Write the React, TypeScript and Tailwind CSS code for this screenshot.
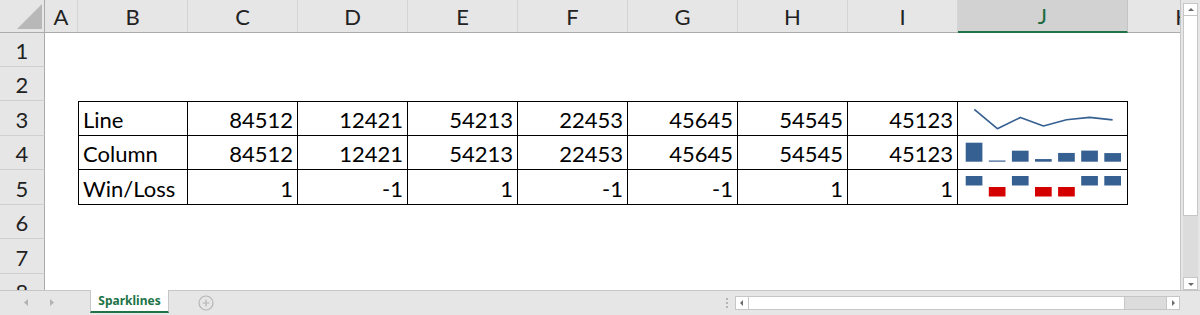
import React from "react";

const COLS = [
  { k: "A", w: 33 },
  { k: "B", w: 110 },
  { k: "C", w: 110 },
  { k: "D", w: 110 },
  { k: "E", w: 110 },
  { k: "F", w: 110 },
  { k: "G", w: 110 },
  { k: "H", w: 110 },
  { k: "I", w: 110 },
  { k: "J", w: 170 },
  { k: "K", w: 110 },
];

const ROW_H = [34, 34, 35, 34, 35, 34, 35, 34];

const VALUES = [84512, 12421, 54213, 22453, 45645, 54545, 45123];
const WINLOSS = [1, -1, 1, -1, -1, 1, 1];

const TABLE: Record<number, (string | number)[]> = {
  3: ["Line", ...VALUES],
  4: ["Column", ...VALUES],
  5: ["Win/Loss", ...WINLOSS],
};

const BLUE = "#376092";
const RED = "#d40000";
const max = Math.max(...VALUES);
const min = Math.min(...VALUES);

function LineSpark() {
  const pts = VALUES.map((v, i) => `${16.3 + i * 23.05},${7.3 + ((max - v) / (max - min)) * 19.4}`).join(" ");
  return (
    <svg width="169" height="34" className="block">
      <polyline points={pts} fill="none" stroke={BLUE} strokeWidth="1.7" strokeLinejoin="round" />
    </svg>
  );
}

function ColumnSpark() {
  return (
    <svg width="169" height="34" className="block">
      {VALUES.map((v, i) => {
        const h = Math.max(1.2, ((v - min) / (max - min)) * 19);
        return <rect key={i} x={7.7 + i * 23.1} y={25.7 - h} width="16.7" height={h} fill={BLUE} />;
      })}
    </svg>
  );
}

function WinLossSpark() {
  return (
    <svg width="169" height="34" className="block">
      {WINLOSS.map((v, i) => (
        <rect key={i} x={7.7 + i * 23.1} y={v > 0 ? 6 : 17} width="16.7" height="9.5" fill={v > 0 ? BLUE : RED} />
      ))}
    </svg>
  );
}

function HeaderRow() {
  return (
    <div className="flex h-[33px] shrink-0 bg-[#e6e6e6] border-b border-[#ababab]">
      <div className="w-[45px] shrink-0 border-r border-[#ababab] relative">
        <svg width="45" height="32" className="block">
          <polygon points="17,29 42,29 42,4" fill="#b8b8b8" />
        </svg>
      </div>
      {COLS.map((c) =>
        c.k === "J" ? (
          <div
            key={c.k}
            style={{ width: c.w }}
            className="shrink-0 flex items-center justify-center bg-[#d2d2d2] border-r border-[#c4c4c4] border-b-2 border-b-[#217346] -mb-px text-[#1e6b40]"
          >
            {c.k}
          </div>
        ) : (
          <div key={c.k} style={{ width: c.w }} className="shrink-0 flex items-center justify-center border-r border-[#d4d4d4] text-[#222]">
            {c.k}
          </div>
        )
      )}
    </div>
  );
}

function BodyRow({ r, h }: { r: number; h: number }) {
  const data = TABLE[r];
  return (
    <div style={{ height: h }} className="flex shrink-0">
      <div className="w-[45px] shrink-0 flex items-center justify-center bg-[#e6e6e6] border-r border-[#ababab] border-b border-b-[#cfcfcf] text-[#222] pt-[2px]">
        {r}
      </div>
      {COLS.map((c, ci) => {
        if (!data || ci === 0 || ci === 10) {
          return <div key={c.k} style={{ width: c.w }} className="shrink-0" />;
        }
        const border = `border-r border-b border-black ${r === 3 ? "border-t" : ""} ${ci === 1 ? "border-l" : ""}`;
        if (ci === 9) {
          return (
            <div key={c.k} style={{ width: c.w }} className={`shrink-0 ${border}`}>
              {r === 3 ? <LineSpark /> : r === 4 ? <ColumnSpark /> : <WinLossSpark />}
            </div>
          );
        }
        const v = data[ci - 1];
        return (
          <div
            key={c.k}
            style={{ width: c.w }}
            className={`shrink-0 flex items-center pt-[2px] text-black ${border} ${ci === 1 ? "justify-start pl-[4px]" : "justify-end pr-[4px]"}`}
          >
            {v}
          </div>
        );
      })}
    </div>
  );
}

function Arrow({ dir }: { dir: "up" | "down" | "left" | "right" }) {
  const pts = {
    up: "2,6 8,6 5,3",
    down: "2,4 8,4 5,7",
    left: "6,2 6,8 3,5",
    right: "4,2 4,8 7,5",
  }[dir];
  return (
    <svg width="10" height="10" className="block">
      <polygon points={pts} fill="#6b6b6b" />
    </svg>
  );
}

function VScroll() {
  return (
    <div className="w-[19px] shrink-0 flex flex-col px-[2px] pt-[3px] bg-[#e6e6e6]">
      <div className="h-[13px] bg-white border border-[#c6c6c6] flex items-center justify-center">
        <Arrow dir="up" />
      </div>
      <div className="h-[200px] bg-white border border-t-0 border-[#c6c6c6]" />
      <div className="flex-1 bg-[#dcdcdc]" />
      <div className="h-[13px] bg-white border border-[#c6c6c6] flex items-center justify-center">
        <Arrow dir="down" />
      </div>
    </div>
  );
}

function TabBar() {
  return (
    <div className="h-[25px] flex items-stretch bg-[#e6e6e6] border-t border-[#c6c6c6] font-['Noto_Sans',sans-serif]">
      <div className="w-[90px] shrink-0 flex items-center">
        <svg width="90" height="24" className="block">
          <polygon points="28,8 28,15 24,11.5" fill="#b3b3b3" />
          <polygon points="50,8 50,15 54,11.5" fill="#b3b3b3" />
        </svg>
      </div>
      <div className="w-[79px] shrink-0 -mt-px bg-white border-x border-[#c6c6c6] border-b-2 border-b-[#217346] mb-[2px] flex items-center justify-center text-[12px] font-bold text-[#217346]">
        Sparklines
      </div>
      <div className="w-[73px] shrink-0 flex items-center justify-center">
        <svg width="18" height="18" className="block">
          <circle cx="9" cy="9" r="7" fill="none" stroke="#b5b5b5" strokeWidth="1.2" />
          <path d="M9 5.5v7M5.5 9h7" stroke="#b5b5b5" strokeWidth="1.2" />
        </svg>
      </div>
      <div className="flex-1" />
      <div className="w-[16px] shrink-0 flex flex-col items-center justify-center gap-[2px]">
        <span className="w-[2px] h-[2px] bg-[#b5b5b5]" />
        <span className="w-[2px] h-[2px] bg-[#b5b5b5]" />
        <span className="w-[2px] h-[2px] bg-[#b5b5b5]" />
      </div>
      <div className="w-[445px] shrink-0 flex items-center">
        <div className="flex w-full h-[14px] border border-[#c6c6c6] bg-[#dcdcdc]">
          <div className="w-[13px] bg-white border-r border-[#c6c6c6] flex items-center justify-center">
            <Arrow dir="left" />
          </div>
          <div className="w-[376px] bg-white border-r border-[#c6c6c6]" />
          <div className="flex-1" />
          <div className="w-[13px] bg-white border-l border-[#c6c6c6] flex items-center justify-center">
            <Arrow dir="right" />
          </div>
        </div>
      </div>
      <div className="w-[20px] shrink-0" />
    </div>
  );
}

export default function App() {
  return (
    <div className="w-[1200px] h-[315px] flex flex-col overflow-hidden bg-[#e6e6e6] font-['Lato','Liberation_Sans',sans-serif] text-[22px]">
      <div className="flex h-[290px] shrink-0">
        <div className="w-[1181px] shrink-0 flex flex-col overflow-hidden bg-white border-r border-[#c6c6c6]">
          <HeaderRow />
          {ROW_H.map((h, i) => (
            <BodyRow key={i} r={i + 1} h={h} />
          ))}
        </div>
        <VScroll />
      </div>
      <TabBar />
    </div>
  );
}
